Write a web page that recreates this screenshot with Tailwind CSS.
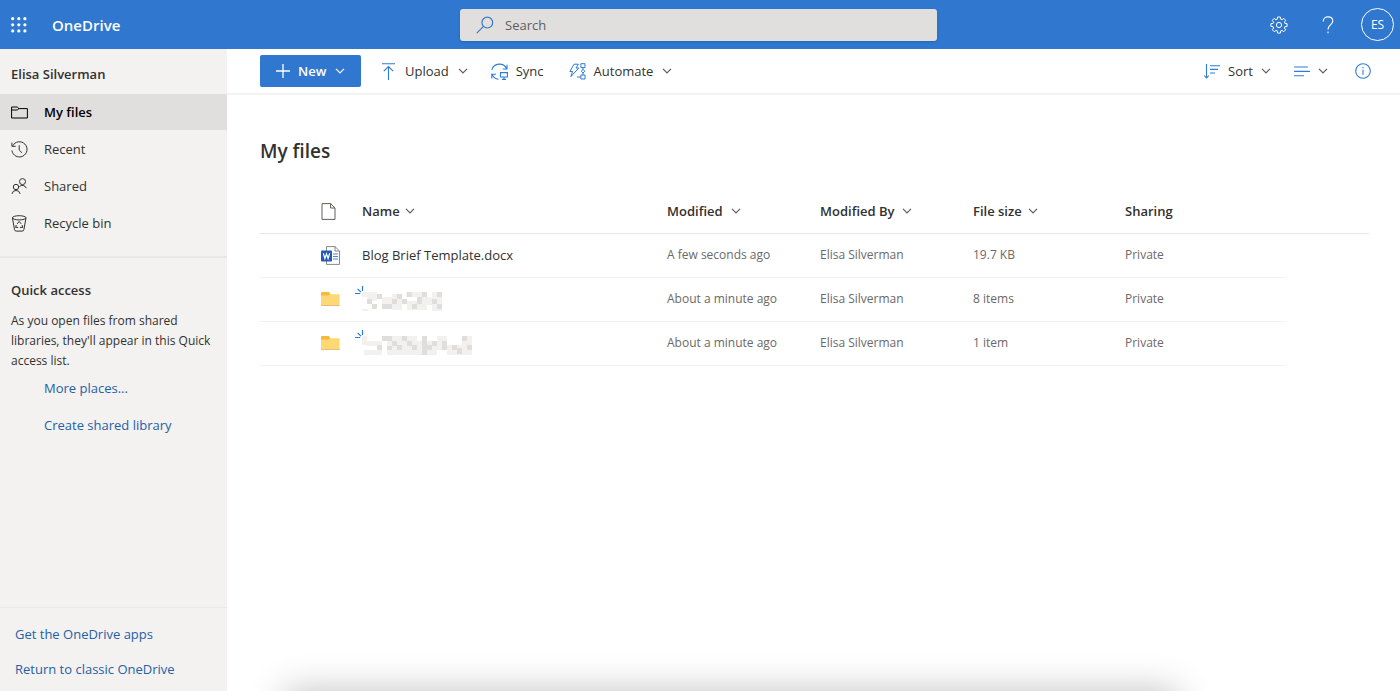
<!DOCTYPE html>
<html lang="en">
<head>
<meta charset="utf-8">
<meta name="viewport" content="width=device-width, initial-scale=1">
<title>My files - OneDrive</title>
<script src="https://cdn.jsdelivr.net/npm/@tailwindcss/browser@4"></script>
</head>
<body class="flex h-screen flex-col overflow-hidden bg-white font-['Open_Sans','Noto_Sans',sans-serif] text-[13px] text-[#323130]">
<svg class="hidden" aria-hidden="true">
  <symbol id="chev" viewBox="0 0 10 10"><path d="M1 2.8l4 4 4-4" fill="none" stroke="currentColor" stroke-width="1.2"/></symbol>
  <symbol id="folder" viewBox="0 0 20 16"><path d="M0 2.4A1.4 1.4 0 0 1 1.4 1H7.4L9.6 3.2H18.6V15H0z" fill="#fcd975"/><path d="M0 2.4A1.4 1.4 0 0 1 1.4 1H7.6L9.3 2.8 7.6 4.6H0z" fill="#f8b93e"/><path d="M0 14.5H18.6" stroke="#eebb77"/></symbol>
  <symbol id="spark" viewBox="0 0 9 9"><path d="M0 7.5H5.2M2.6 2.8L6 6.2M7.5 0V5" fill="none" stroke="#2f77cf" stroke-width="1.2"/></symbol>
</svg>

<header class="grid h-[49px] shrink-0 grid-cols-[1fr_minmax(0,477px)_1fr] items-center bg-[#2f77cf] pr-[3px] text-white">
  <div class="flex items-center">
    <button aria-label="App launcher" class="ml-[11px]">
      <svg class="size-4" viewBox="0 0 16 16" fill="currentColor"><circle cx="1.7" cy="1.7" r="1.6"/><circle cx="7.8" cy="1.7" r="1.6"/><circle cx="13.9" cy="1.7" r="1.6"/><circle cx="1.7" cy="7.8" r="1.6"/><circle cx="7.8" cy="7.8" r="1.6"/><circle cx="13.9" cy="7.8" r="1.6"/><circle cx="1.7" cy="13.9" r="1.6"/><circle cx="7.8" cy="13.9" r="1.6"/><circle cx="13.9" cy="13.9" r="1.6"/></svg>
    </button>
    <a href="#" class="ml-[25px] pt-0.5 text-[15px] font-semibold">OneDrive</a>
  </div>
  <label class="flex h-8 items-center rounded-[3px] bg-[#e0dfde] pl-4 shadow">
    <svg class="size-[18px] text-[#3b78c4]" viewBox="0 0 18 18" fill="none" stroke="currentColor" stroke-width="1.2"><circle cx="11.3" cy="6.6" r="5.4"/><path d="M7.5 10.4L.8 17.1"/></svg>
    <input type="search" aria-label="Search" placeholder="Search" class="ml-[11px] min-w-0 flex-1 bg-transparent pt-0.5 text-[13px] outline-none placeholder:text-[#605e5c]">
  </label>
  <div class="flex items-center justify-end pr-[3px]">
    <button aria-label="Settings"><svg class="size-[18px]" viewBox="0 0 18 18" fill="none" stroke="currentColor" stroke-width="1" stroke-linejoin="round"><circle cx="9" cy="9" r="2.6"/><path d="M7.6 1h2.8l.3 2.2 1.3.5 1.8-1.3 1.9 1.9-1.3 1.8.5 1.3 2.2.3v2.7l-2.2.3-.5 1.3 1.3 1.8-1.9 1.9-1.8-1.3-1.3.5-.3 2.2H7.6l-.3-2.2-1.3-.5-1.8 1.3-1.9-1.9 1.3-1.8-.5-1.3-2.2-.3V7.7l2.2-.3.5-1.3-1.3-1.8 1.9-1.9L6 3.7l1.3-.5z"/></svg></button>
    <button aria-label="Help" class="ml-[34px]"><svg class="h-[18px] w-3" viewBox="0 0 12 18" fill="none" stroke="currentColor" stroke-width="1.1"><path d="M1.2 5.6C1.2 2.6 3.2.9 6 .9s4.8 1.7 4.8 4.2C10.8 8.5 6 8.8 6 13.4M6 15.5v1.7"/></svg></button>
    <button aria-label="Account: Elisa Silverman" class="ml-[27px] size-[33px] rounded-full border border-white pt-px text-[12px]">ES</button>
  </div>
</header>

<div class="flex min-h-0 flex-1">
  <aside class="flex w-[227px] shrink-0 flex-col bg-[#f3f2f1]">
    <h2 class="flex h-[45px] items-center pt-[6px] pl-[11px] font-semibold">Elisa Silverman</h2>
    <nav aria-label="Files" class="flex h-[164px] flex-col gap-px border-b-2 border-[#e8e7e6]">
      <a href="#" aria-current="page" class="flex h-9 items-center gap-4 bg-[#e0dfde] pl-[11px] font-semibold text-black">
        <svg class="size-[17px]" viewBox="0 0 17 17" fill="none" stroke="currentColor" stroke-width="1"><path d="M.6 14V3H6.2L8 4.6H16.4V14zM.6 6H6.2L8 4.6"/></svg><span class="pt-0.5">My files</span></a>
      <a href="#" class="flex h-9 items-center gap-4 pl-[11px]">
        <svg class="size-[17px]" viewBox="0 0 17 17" fill="none" stroke="currentColor" stroke-width="1"><path d="M1.7 4.8A7.6 7.6 0 1 1 .9 9.5M.9 1.6V5.3H4.7M8.2 4.2V9L11 11.8"/></svg><span class="pt-0.5">Recent</span></a>
      <a href="#" class="flex h-9 items-center gap-4 pl-[11px]">
        <svg class="size-[17px]" viewBox="0 0 17 17" fill="none" stroke="currentColor" stroke-width="1"><circle cx="11.5" cy="3.6" r="3"/><circle cx="5" cy="9" r="2.7"/><path d="M8.4 8.6a4.2 4.2 0 0 1 6.9 1.6M1 15.9a4.1 4.1 0 0 1 8.1 0"/></svg><span class="pt-0.5">Shared</span></a>
      <a href="#" class="flex h-9 items-center gap-4 pl-[11px]">
        <svg class="size-[17px]" viewBox="0 0 17 17" fill="none" stroke="currentColor" stroke-width="1"><ellipse cx="8.2" cy="2.8" rx="6.8" ry="2.1"/><path d="M1.4 2.8L3.5 14.6q.2 1.5 1.8 1.5h5.8q1.6 0 1.8-1.5L15 2.8M6.2 8.9L8.2 6.4l2 2.5M5.3 10l-.7 2.4h2.6M11.1 10l.7 2.4H9"/></svg><span class="pt-px">Recycle bin</span></a>
    </nav>
    <section>
      <h2 class="mt-[22px] pl-[11px] leading-5 font-semibold">Quick access</h2>
      <p class="mt-[11px] pr-4 pl-[11px] text-[12px] leading-5">As you open files from shared libraries, they'll appear in this Quick access list.</p>
      <div class="flex flex-col gap-px pl-11 text-[#2560a5]">
        <a href="#" class="flex h-9 items-center">More places...</a>
        <a href="#" class="flex h-9 items-center">Create shared library</a>
      </div>
    </section>
    <div class="mt-auto flex h-[84px] flex-col gap-[15px] border-t border-[#ebeae9] pt-4 pl-[15px] leading-5 text-[#2560a5]">
      <a href="#">Get the OneDrive apps</a>
      <a href="#">Return to classic OneDrive</a>
    </div>
  </aside>

  <main class="relative min-w-0 flex-1 overflow-hidden">
    <div role="toolbar" aria-label="Commands" class="flex h-[46px] items-center border-b-2 border-[#f3f2f2] pr-[29px] pl-[33px]">
      <button class="flex h-8 w-[101px] items-center rounded-[2px] bg-[#2f77cf] pl-4 font-semibold text-white">
        <svg class="size-[14px]" viewBox="0 0 14 14" stroke="currentColor" stroke-width="1.3"><path d="M7 0v14M0 7h14"/></svg>
        <span class="ml-2 pt-0.5">New</span><svg class="ml-[9px] size-[10px]"><use href="#chev"/></svg>
      </button>
      <button class="ml-[21px] flex items-center">
        <svg class="h-[17px] w-[13px] text-[#2f7bd6]" viewBox="0 0 13 17" fill="none" stroke="currentColor" stroke-width="1.1"><path d="M0 .7H13M6.5 17V3.5M1.8 8.2L6.5 3.5l4.7 4.7"/></svg>
        <span class="ml-[10px] pt-0.5">Upload</span><svg class="ml-[9px] size-[10px] text-[#605e5c]"><use href="#chev"/></svg>
      </button>
      <button class="ml-[23px] flex items-center">
        <svg class="size-[17px] text-[#2f7bd6]" viewBox="0 0 17 17" fill="none" stroke="currentColor" stroke-width="1.1"><path d="M.8 6.8A8 8 0 0 1 15.7 5.7M16 1.8V6H11.8M.8 15.4V11.2H5M1.2 11.4Q3 15.8 7.5 16.3M9.5 9.6H16.4V14H9.5zM13 14V16.4M11 16.4h4"/></svg>
        <span class="ml-2 pt-0.5">Sync</span>
      </button>
      <button class="ml-[25px] flex items-center">
        <svg class="size-[17px] text-[#2f7bd6]" viewBox="0 0 17 17" fill="none" stroke="currentColor" stroke-width="1" stroke-linejoin="round"><path d="M5 1.2H9.4L7 5H9.8L1.8 13.7 3.6 8.5H.9zM11.9.7H16V4.6H11.9zM11.9 12H16V16H11.9zM14 4.6V12M11.9 14H8"/><path d="M14 6.4L15.8 8.2 14 10 12.2 8.2z" fill="#fff"/></svg>
        <span class="ml-2 pt-0.5">Automate</span><svg class="ml-[9px] size-[10px] text-[#605e5c]"><use href="#chev"/></svg>
      </button>
      <button class="ml-auto flex items-center">
        <svg class="h-[15px] w-4 text-[#2f7bd6]" viewBox="0 0 16 15" fill="none" stroke="currentColor" stroke-width="1.1"><path d="M2.5 0V14M.3 11.6L2.5 14l2.2-2.4M6 1.8H16M6 5.4H14M6 9H11"/></svg>
        <span class="ml-2 pt-0.5">Sort</span><svg class="ml-2 size-[10px] text-[#605e5c]"><use href="#chev"/></svg>
      </button>
      <button aria-label="View options" class="ml-[23px] flex items-center">
        <svg class="h-[11px] w-4 text-[#2f7bd6]" viewBox="0 0 16 11" stroke="currentColor" stroke-width="1.1"><path d="M0 1H14M0 5.4H16M0 9.8H10"/></svg>
        <svg class="ml-2 size-[10px] text-[#605e5c]"><use href="#chev"/></svg>
      </button>
      <button aria-label="Details" class="ml-[27px]">
        <svg class="size-4 text-[#2f7bd6]" viewBox="0 0 16 16" fill="none" stroke="currentColor" stroke-width="1.1"><circle cx="8" cy="8" r="7.3"/><path d="M8 6.7V11.8M8 4V5.3"/></svg>
      </button>
    </div>

    <div class="pr-[31px] pl-[33px]">
      <h1 class="mt-[42px] text-[19px] leading-7 font-semibold">My files</h1>
      <table class="mt-[25px] w-full table-fixed border-separate border-spacing-0 text-left">
        <colgroup><col class="w-[61px]"><col class="w-[41px]"><col class="w-[305px]"><col class="w-[153px]"><col class="w-[153px]"><col class="w-[152px]"><col class="w-[161px]"><col></colgroup>
        <thead>
          <tr class="h-11 *:border-b *:border-[#e6e5e4]">
            <th></th>
            <th scope="col" aria-label="File type"><svg class="size-[17px] text-[#605e5c]" viewBox="0 0 17 17" fill="none" stroke="currentColor" stroke-width="1"><path d="M1 .6H9.6L14 5V16.4H1zM9.6 .6V5H14"/></svg></th>
            <th scope="col" class="font-semibold"><button class="flex items-center gap-[5px]">Name<svg class="mb-0.5 size-[10px] text-[#605e5c]"><use href="#chev"/></svg></button></th>
            <th scope="col" class="font-semibold"><button class="flex items-center gap-2">Modified<svg class="mb-0.5 size-[10px] text-[#605e5c]"><use href="#chev"/></svg></button></th>
            <th scope="col" class="font-semibold"><button class="flex items-center gap-2">Modified By<svg class="mb-0.5 size-[10px] text-[#605e5c]"><use href="#chev"/></svg></button></th>
            <th scope="col" class="font-semibold"><button class="flex items-center gap-[6px]">File size<svg class="mb-0.5 size-[10px] text-[#605e5c]"><use href="#chev"/></svg></button></th>
            <th scope="col" class="font-semibold">Sharing</th>
            <th></th>
          </tr>
        </thead>
        <tbody class="text-[12px] text-[#6b6967]">
          <tr class="h-11 *:border-b *:border-[#f3f2f2] *:pb-0.5 *:last:border-b-0">
            <td></td>
            <td><svg class="mt-0.5 h-[19px] w-5" viewBox="0 0 20 19"><path d="M5.5.6H14L18.5 5V18.4H5.5z" fill="#fff" stroke="#8a8886"/><path d="M14 .6V5h4.5" fill="none" stroke="#8a8886"/><path d="M12 8h5M12 10.5h5M12 13h5" stroke="#4a86d8" stroke-width="1.2"/><rect y="4.5" width="11" height="11" rx="1" fill="#2459b8"/><path d="M2.3 7.3L3.9 12.5 5.5 7.8 7.1 12.5 8.7 7.3" fill="none" stroke="#fff" stroke-width="1.2"/></svg></td>
            <td><a href="#" class="mt-0.5 block text-[13px] text-[#323130]">Blog Brief Template.docx</a></td>
            <td>A few seconds ago</td><td>Elisa Silverman</td><td>19.7 KB</td><td>Private</td><td></td>
          </tr>
          <tr class="h-11 *:border-b *:border-[#f3f2f2] *:pb-0.5 *:last:border-b-0">
            <td></td>
            <td><svg class="h-4 w-5"><use href="#folder"/></svg></td>
            <td><a href="#" aria-label="Folder, name hidden" class="-ml-[7px] flex items-start"><svg class="size-[9px]"><use href="#spark"/></svg>
              <svg class="-ml-0.5 mt-[6px] h-[19px] w-20" viewBox="0 0 80 19" shape-rendering="crispEdges"><path d="M0 0h15v5H0zM5 5h10v4H5zM20 5h10v8H20zM30 2h10v16H30zM44 0h16v5H44zM60 5h10v8H60zM70 0h10v19H70zM45 9h20v9H45zM0 17h6v2H0z" fill="#f2f1f0"/><path d="M5 7h5v5H5zM10 12h5v5h-5zM15 2h5v5h-5zM20 12h5v5h-5zM25 12h5v5h-5zM30 7h5v5h-5zM35 2h5v5h-5zM40 7h5v5h-5zM45 0h5v5h-5zM50 12h5v5h-5zM55 5h5v7h-5zM60 0h5v5h-5zM70 7h5v5h-5zM75 0h5v5h-5zM75 12h5v5h-5z" fill="#dfdedd"/></svg></a></td>
            <td>About a minute ago</td><td>Elisa Silverman</td><td>8 items</td><td>Private</td><td></td>
          </tr>
          <tr class="h-11 *:border-b *:border-[#f3f2f2] *:pb-0.5 *:last:border-b-0">
            <td></td>
            <td><svg class="h-4 w-5"><use href="#folder"/></svg></td>
            <td><a href="#" aria-label="Folder, name hidden" class="-ml-[7px] flex items-start"><svg class="size-[9px]"><use href="#spark"/></svg>
              <svg class="-ml-0.5 mt-[6px] h-[19px] w-[110px]" viewBox="0 0 110 19" shape-rendering="crispEdges"><path d="M0 0h5v9H0zM5 5h15v5H5zM2 14h18v5H2zM25 0h30v19H25zM55 5h20v14H55zM75 0h10v14H75zM85 9h15v10H85zM100 0h10v19h-10z" fill="#f2f1f0"/><path d="M15 9h5v5h-5zM20 0h10v5H20zM30 5h5v5h-5zM25 10h5v4h-5zM35 9h5v5h-5zM40 0h5v5h-5zM45 5h5v5h-5zM50 9h5v5h-5zM60 0h5v19h-5zM65 9h5v5h-5zM70 5h5v5h-5zM80 5h5v9h-5zM90 9h5v5h-5zM95 12h5v6h-5zM100 0h5v5h-5zM105 9h5v5h-5z" fill="#dfdedd"/></svg></a></td>
            <td>About a minute ago</td><td>Elisa Silverman</td><td>1 item</td><td>Private</td><td></td>
          </tr>
        </tbody>
      </table>
    </div>
    <div aria-hidden="true" class="absolute right-[222px] -bottom-10 left-[57px] h-10 rounded-lg shadow-[0_0_36px_rgba(0,0,0,0.25)]"></div>
  </main>
</div>
</body>
</html>
